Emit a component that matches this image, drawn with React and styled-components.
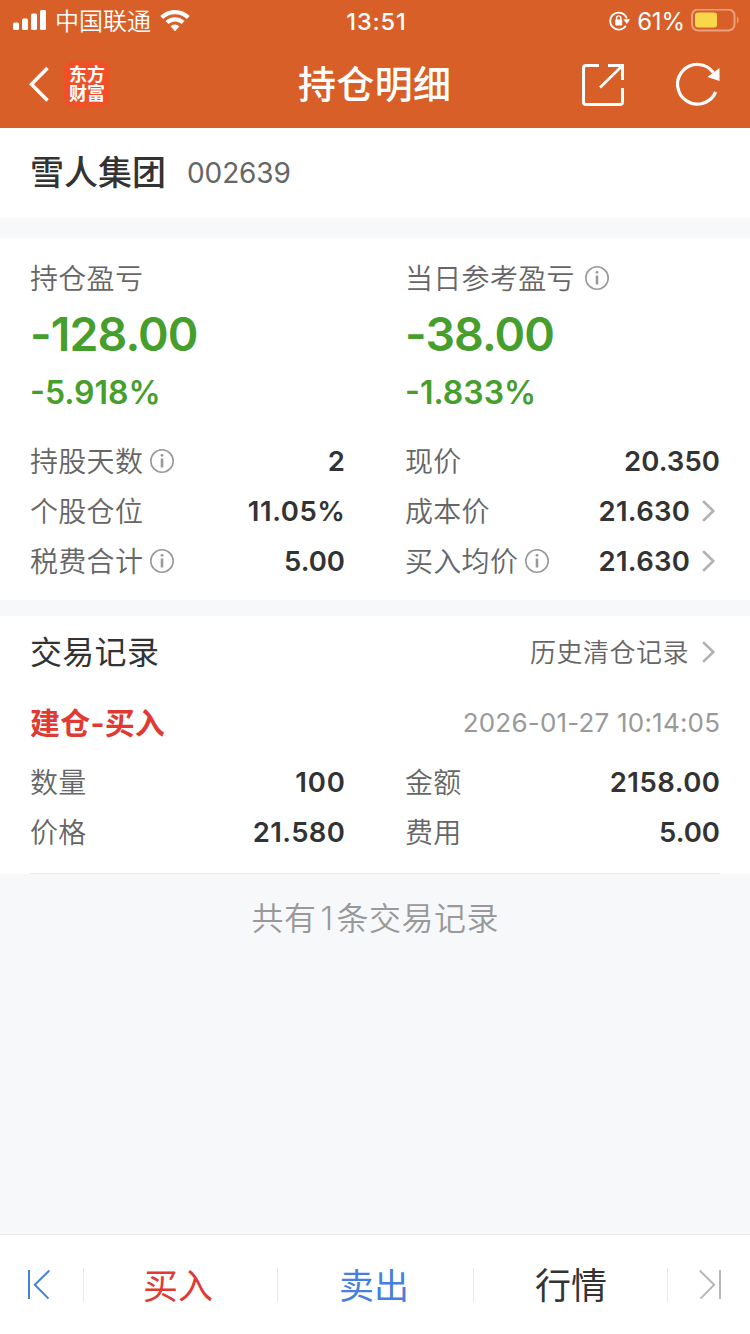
import React from "react";
import styled, { createGlobalStyle } from "styled-components";

const Global = createGlobalStyle`
  * { box-sizing: border-box; }
  body { margin: 0; background: #f7f8fa; }
  svg { display: block; flex: none; }
`;

const Page = styled.div`
  width: 750px;
  height: 1334px;
  display: flex;
  flex-direction: column;
  background: #f7f8fa;
  overflow: hidden;
  font-family: Inter, "Noto Sans CJK SC", sans-serif;
  color: #333;
`;

const Text = styled.span`
  font-size: ${(p) => p.$size}px;
  font-weight: ${(p) => p.$weight || 400};
  color: ${(p) => p.$color || "inherit"};
  letter-spacing: ${(p) => p.$track || 0}px;
  margin-right: ${(p) => -(p.$track || 0)}px;
  line-height: ${(p) => p.$line || 40}px;
  padding-top: ${(p) => p.$drop || 0}px;
  white-space: nowrap;
`;

const Header = styled.header`
  height: 128px;
  background: #d85f27;
  color: #fff;
`;

const StatusBar = styled.div`
  height: 40px;
  display: grid;
  grid-template-columns: 1fr auto 1fr;
  align-items: center;
  padding: 0 11px 0 13px;
`;

const Group = styled.div`
  display: flex;
  align-items: center;
  justify-content: ${(p) => (p.$end ? "flex-end" : "flex-start")};
  gap: ${(p) => p.$gap || 0}px;
`;

const NavBar = styled.div`
  height: 88px;
  display: grid;
  grid-template-columns: 1fr auto 1fr;
  align-items: center;
  padding: 0 30px 0 29px;
`;

const Logo = styled.div`
  width: 46px;
  height: 46px;
  border-radius: 9px;
  background: #ee5127;
  display: flex;
  flex-direction: column;
  align-items: center;
  justify-content: center;
  font-size: 18px;
  font-weight: 700;
  line-height: 19.5px;
`;

const StockBar = styled.section`
  height: 90px;
  background: #fff;
  display: flex;
  align-items: center;
  gap: 21px;
  padding: 0 30px;
`;

const Panel = styled.section`
  background: #fff;
  margin-top: ${(p) => p.$gap}px;
  height: ${(p) => p.$height}px;
  padding: 0 30px;
  padding-top: ${(p) => p.$top || 0}px;
`;

const Columns = styled.div`
  display: grid;
  grid-template-columns: 315px 315px;
  column-gap: 60px;
`;

const Summary = styled.div`
  display: flex;
  flex-direction: column;
  align-items: flex-start;
  height: 178px;
`;

const Row = styled.div`
  height: ${(p) => p.$height || 50}px;
  display: flex;
  align-items: center;
  justify-content: space-between;
`;

const Divider = styled.div`
  height: 1px;
  margin-top: 16px;
  background: #ebebed;
`;

const Footnote = styled.p`
  flex: 1;
  margin: 0;
  padding-top: 22px;
  text-align: center;
  color: #999;
`;

const Count = styled.span`
  margin: 0 3px 0 4px;
`;

const TabBar = styled.nav`
  height: 100px;
  background: #fff;
  border-top: 1px solid #e8e9ec;
  display: grid;
  grid-template-columns: 83px 194px 196px 194px 83px;
  align-items: center;
`;

const Tab = styled.div`
  height: 34px;
  display: flex;
  align-items: center;
  justify-content: center;
  border-left: ${(p) => (p.$first ? 0 : 1)}px solid #e8e8e8;
  padding-right: ${(p) => p.$inset || 0}px;
  padding-left: ${(p) => p.$indent || 0}px;
`;

const InfoIcon = () => (
  <svg width="24" height="24" viewBox="0 0 24 24" fill="none" stroke="#999">
    <circle cx="12" cy="12" r="11.2" strokeWidth="1.6" />
    <path d="M12 9.5v9" strokeWidth="2.6" />
    <circle cx="12" cy="6.3" r="1.4" fill="#999" stroke="none" />
  </svg>
);

const Chevron = () => (
  <svg width="30" height="24" viewBox="0 0 30 24" fill="none" stroke="#b2b2b2" strokeWidth="2.6" strokeLinecap="round">
    <path d="M13.8 2.8 23.3 12l-9.5 9.2" />
  </svg>
);

const Signal = () => (
  <svg width="33" height="22" viewBox="0 0 33 22" fill="#fff">
    <rect x="0" y="12.5" width="6" height="7.5" rx="1.5" />
    <rect x="9" y="8.5" width="6" height="11.5" rx="1.5" />
    <rect x="18" y="3.5" width="6" height="16.5" rx="1.5" />
    <rect x="27" y="0" width="6" height="20" rx="1.5" />
  </svg>
);

const Wifi = () => (
  <svg width="30" height="22" viewBox="0 0 30 22" fill="#fff">
    <path d="M15 0C9.300 0 4.100 2.300 0.300 6l2.800 3A17 17 0 0 1 15 4.300 17 17 0 0 1 26.900 9l2.800-3A21 21 0 0 0 15 0z" />
    <path d="M15 7.300c-3.700 0-7 1.400-9.500 3.800l2.900 3A9.500 9.500 0 0 1 15 11.400c2.600 0 4.900 1 6.600 2.700l2.900-3A13.700 13.700 0 0 0 15 7.300z" />
    <path d="M15 14.600c-1.700 0-3.200.7-4.300 1.800L15 21.300l4.300-4.900a6 6 0 0 0-4.300-1.800z" />
  </svg>
);

const RotationLock = () => (
  <svg width="22" height="20" viewBox="0 0 22 20" fill="none" stroke="#fff">
    <path d="M16.800 14.800A8.500 8.500 0 1 1 17.800 7.500" strokeWidth="1.8" />
    <path d="M14.300 8.300h6.800l-3.200 4.800z" fill="#fff" stroke="none" />
    <rect x="6.200" y="8.600" width="7" height="5.800" rx=".8" fill="#fff" stroke="none" />
    <path d="M7.600 9V7a2.100 2.100 0 0 1 4.200 0v2" strokeWidth="1.4" />
  </svg>
);

const Battery = () => (
  <svg width="48" height="24" viewBox="0 0 48 24" fill="none">
    <rect x="1" y="0.5" width="42.5" height="21" rx="6" stroke="#fff" strokeOpacity=".42" strokeWidth="2" />
    <rect x="4" y="3.5" width="22" height="15" rx="3" fill="#f8d84a" />
    <path d="M46 7.500c2 1 2 6 0 7z" fill="#fff" fillOpacity=".45" />
  </svg>
);

const Back = () => (
  <svg width="22" height="36" viewBox="0 0 22 36" fill="none" stroke="#fff" strokeWidth="3.6">
    <path d="M18.500 2 2.500 18.300l16 16.200" />
  </svg>
);

const Share = () => (
  <svg width="42" height="44" viewBox="0 0 42 44" fill="none" stroke="#fff" strokeWidth="3">
    <path d="M17 3.500H4A2.500 2.500 0 0 0 1.500 6v34A2.500 2.500 0 0 0 4 42.500h34a2.500 2.500 0 0 0 2.500-2.500V26M26 3.500h14.500V18" />
    <path d="M40 4 18 25.500" strokeWidth="2.6" />
  </svg>
);

const Refresh = () => (
  <svg width="44" height="44" viewBox="0 0 44 44" fill="none" stroke="#fff">
    <path d="M39.600 30A19.800 19.800 0 1 1 37.300 10.500" strokeWidth="3.2" />
    <path d="M43.500 6v13L31.500 15z" fill="#fff" stroke="none" />
  </svg>
);

const StepIcon = ({ flipped, color }) => (
  <svg width="24" height="31" viewBox="0 0 24 31" fill="none" stroke={color} strokeWidth="2">
    {flipped ? <path d="M22 1v29M1.700 1.500 16.200 15.800 2.500 29.600" /> : <path d="M2 1v29M22.300 1.500 7.800 15.800 21.500 29.600" />}
  </svg>
);

const Label = ({ children }) => (
  <Text $size={28} $color="#666" $track={0.3} $weight={350} $line={38} $drop={2}>{children}</Text>
);

const Field = ({ label, value, info, link, track = 0 }) => (
  <Row>
    <Group $gap={7}>
      <Label>{label}</Label>
      {info && <InfoIcon />}
    </Group>
    <Group>
      <Text $size={27.5} $weight={600} $track={track}>{value}</Text>
      {link && <Chevron />}
    </Group>
  </Row>
);

const Result = ({ label, info, amount, percent }) => (
  <Summary>
    <Group $gap={10}>
      <Label>{label}</Label>
      {info && <InfoIcon />}
    </Group>
    <Text $size={46.5} $weight={600} $color="#469e2c" $line={72} $track={-0.9}>{amount}</Text>
    <Text $size={32} $weight={600} $color="#469e2c" $line={46}>{percent}</Text>
  </Summary>
);

export default function App() {
  return (
    <Page>
      <Global />
      <Header>
        <StatusBar>
          <Group $gap={9}>
            <Signal />
            <Text $size={24} $weight={350} $drop={2}>中国联通</Text>
            <Wifi />
          </Group>
          <Text $size={23.5} $weight={500} $track={0.9} $drop={1}>13:51</Text>
          <Group $end $gap={6}>
            <RotationLock />
            <Text $size={24} $drop={1} $track={-0.2}>61%</Text>
            <Battery />
          </Group>
        </StatusBar>
        <NavBar>
          <Group $gap={13}>
            <Back />
            <Logo>
              <span>东方</span>
              <span>财富</span>
            </Logo>
          </Group>
          <Text $size={38} $weight={500} $line={50} $track={0.3}>持仓明细</Text>
          <Group $end $gap={52}>
            <Share />
            <Refresh />
          </Group>
        </NavBar>
      </Header>

      <StockBar>
        <Text $size={34} $weight={500}>雪人集团</Text>
        <Text $size={28} $color="#666" $track={-0.1}>002639</Text>
      </StockBar>

      <Panel $gap={20} $height={362} $top={20}>
        <Columns>
          <Result label="持仓盈亏" amount="-128.00" percent="-5.918%" />
          <Result label="当日参考盈亏" info amount="-38.00" percent="-1.833%" />
          <Field label="持股天数" info value="2" />
          <Field label="现价" value="20.350" track={0.1} />
          <Field label="个股仓位" value="11.05%" track={0.6} />
          <Field label="成本价" value="21.630" track={0.3} link />
          <Field label="税费合计" info value="5.00" />
          <Field label="买入均价" info value="21.630" track={0.3} link />
        </Columns>
      </Panel>

      <Panel $gap={16} $height={258}>
        <Row $height={72}>
          <Text $size={32} $track={0.3} $drop={2}>交易记录</Text>
          <Group $gap={1.5}>
            <Text $size={26} $color="#666" $track={0.5} $weight={350} $drop={2}>历史清仓记录</Text>
            <Chevron />
          </Group>
        </Row>
        <Row $height={69}>
          <Text $size={30} $weight={700} $color="#e03a32" $track={0.2}>建仓-买入</Text>
          <Text $size={26} $color="#999" $track={0.2}>2026-01-27 10:14:05</Text>
        </Row>
        <Columns>
          <Field label="数量" value="100" track={0.9} />
          <Field label="金额" value="2158.00" track={0.5} />
          <Field label="价格" value="21.580" track={0.4} />
          <Field label="费用" value="5.00" />
        </Columns>
        <Divider />
      </Panel>

      <Footnote>
        <Text $size={32} $line={46} $weight={350} $track={0.5}>共有<Count>1</Count>条交易记录</Text>
      </Footnote>

      <TabBar>
        <Tab $first $inset={6}><StepIcon color="#477fdd" /></Tab>
        <Tab $inset={5}><Text $size={35} $color="#e03a32" $drop={2}>买入</Text></Tab>
        <Tab $inset={3}><Text $size={35} $color="#477fdd" $drop={2}>卖出</Text></Tab>
        <Tab $indent={1}><Text $size={36} $drop={2}>行情</Text></Tab>
        <Tab $indent={2}><StepIcon flipped color="#b8b8b8" /></Tab>
      </TabBar>
    </Page>
  );
}
